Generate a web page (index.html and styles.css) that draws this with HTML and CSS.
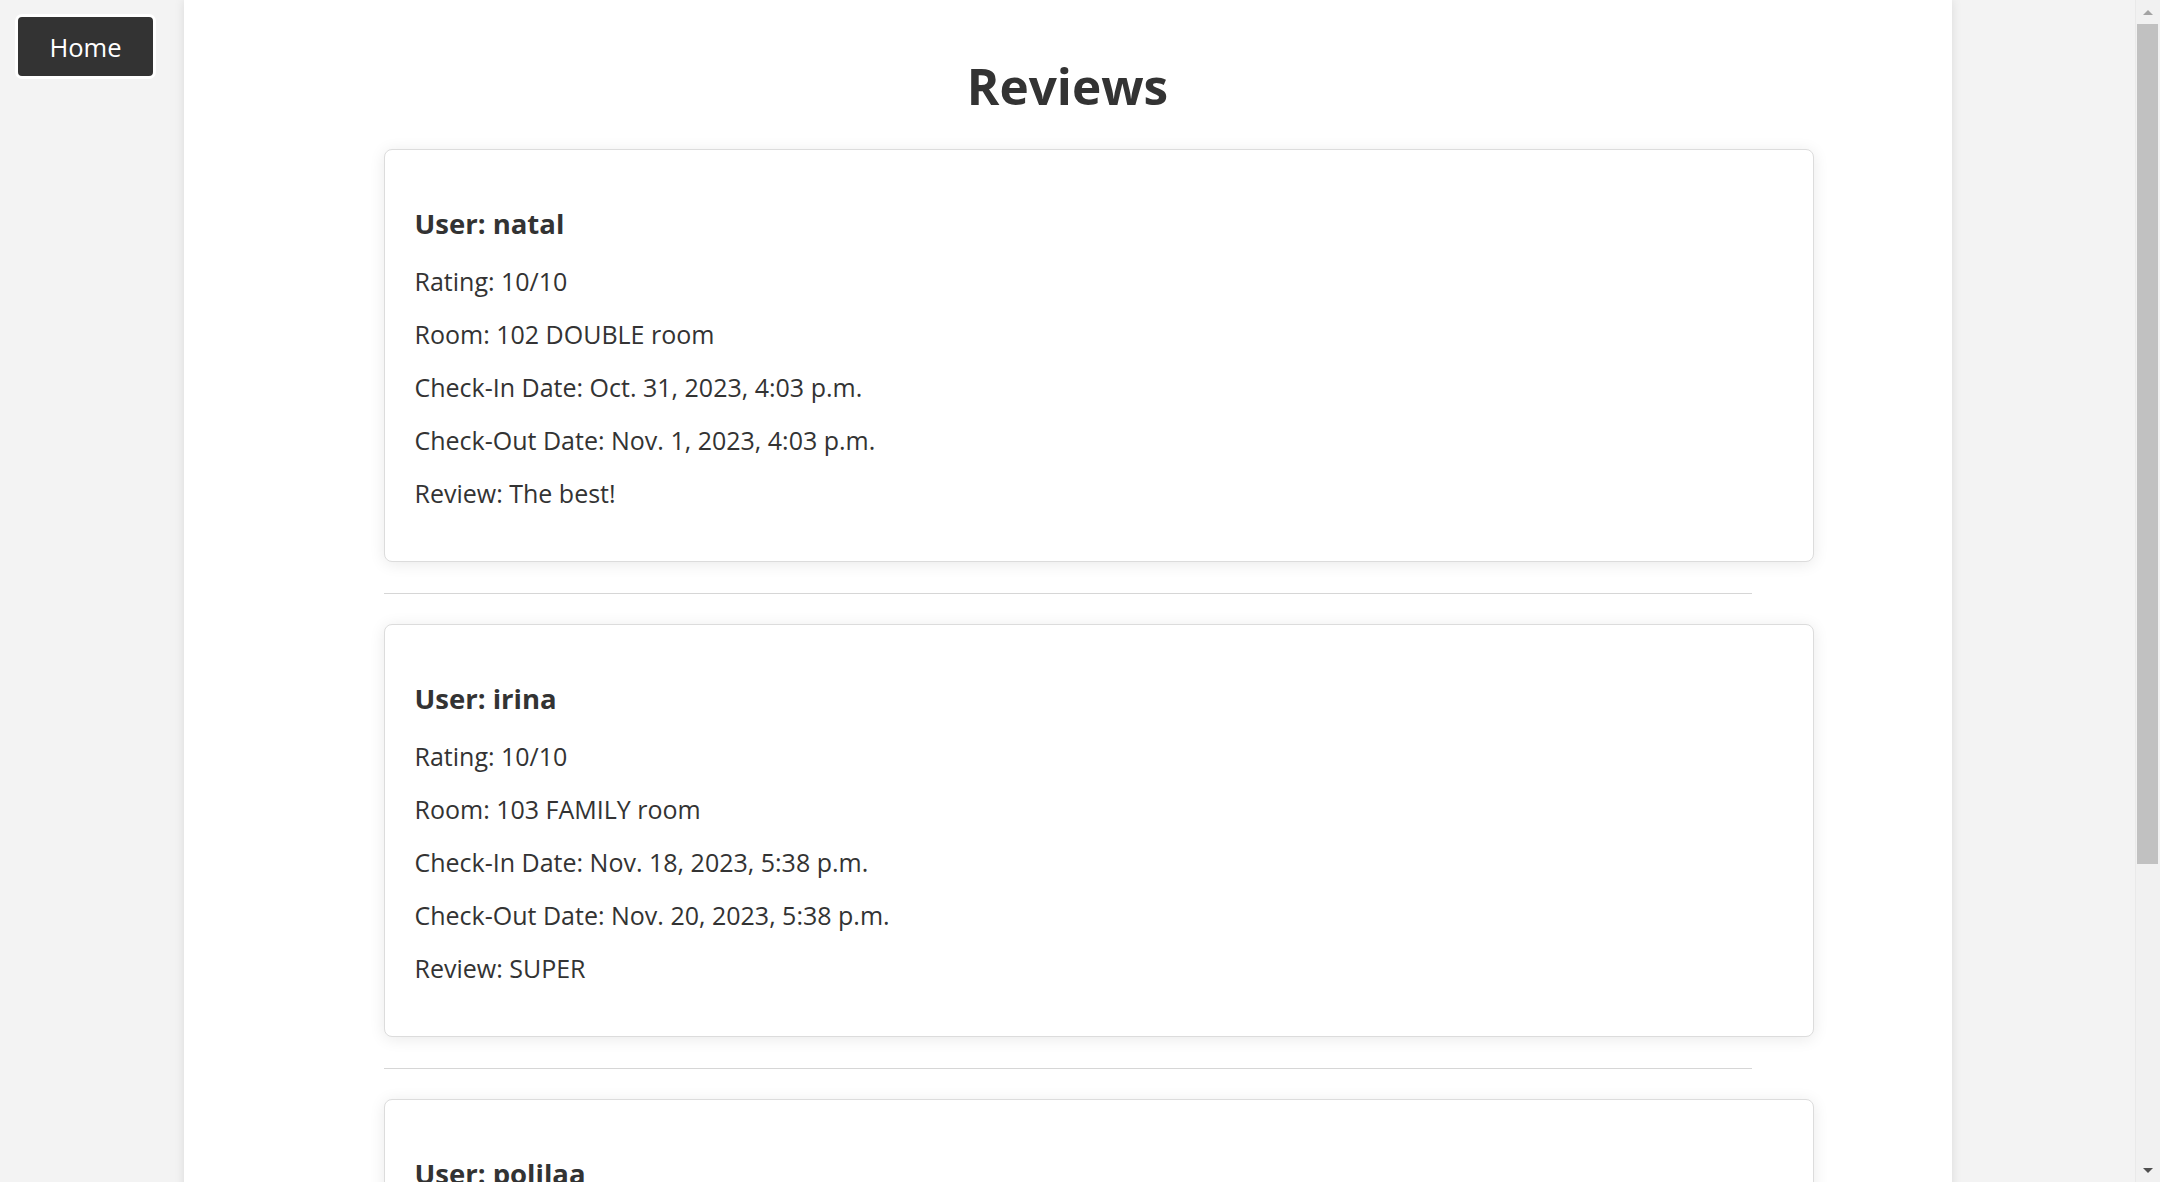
FILE: index.html
```html
<!DOCTYPE html>
<html lang="en">
<head>
<meta charset="utf-8">
<title>Reviews</title>
<link rel="stylesheet" href="styles.css">
</head>
<body>
<a class="home-btn" href="#">Home</a>
<main class="page">
  <h1 class="page-title">Reviews</h1>
  <section class="review-list">
    <article class="review-card">
      <h3 class="review-user">User: natal</h3>
      <p class="review-line">Rating: 10/10</p>
      <p class="review-line">Room: 102 DOUBLE room</p>
      <p class="review-line">Check-In Date: Oct. 31, 2023, 4:03 p.m.</p>
      <p class="review-line">Check-Out Date: Nov. 1, 2023, 4:03 p.m.</p>
      <p class="review-line">Review: The best!</p>
    </article>
    <hr class="divider">
    <article class="review-card">
      <h3 class="review-user">User: irina</h3>
      <p class="review-line">Rating: 10/10</p>
      <p class="review-line">Room: 103 FAMILY room</p>
      <p class="review-line">Check-In Date: Nov. 18, 2023, 5:38 p.m.</p>
      <p class="review-line">Check-Out Date: Nov. 20, 2023, 5:38 p.m.</p>
      <p class="review-line">Review: SUPER</p>
    </article>
    <hr class="divider">
    <article class="review-card">
      <h3 class="review-user">User: polilaa</h3>
      <p class="review-line">Rating: 9/10</p>
      <p class="review-line">Room: 101 SINGLE room</p>
      <p class="review-line">Check-In Date: Dec. 5, 2023, 2:15 p.m.</p>
      <p class="review-line">Check-Out Date: Dec. 7, 2023, 2:15 p.m.</p>
      <p class="review-line">Review: Nice stay</p>
    </article>
    <hr class="divider">
  </section>
</main>
<div class="scrollbar" aria-hidden="true">
  <div class="scroll-btn"><span class="arrow arrow-up"></span></div>
  <div class="scroll-track"><div class="scroll-thumb"></div></div>
  <div class="scroll-btn"><span class="arrow arrow-down"></span></div>
</div>
</body>
</html>
```
FILE: styles.css
```css
html {
  background: #f3f3f3;
}
body {
  margin: 0;
  padding-right: 25px;
  background: #f3f3f3;
  color: #333;
  font-family: "Open Sans", "Noto Sans", sans-serif;
}
.home-btn {
  position: fixed;
  top: 14px;
  left: 15px;
  width: 135px;
  height: 59px;
  display: flex;
  align-items: center;
  justify-content: center;
  background: #333;
  border: 3px solid #fff;
  border-radius: 7px;
  color: #fff;
  text-decoration: none;
  font-size: 25.5px;
  z-index: 5;
}
.page {
  width: 1768px;
  margin: 0 auto;
  box-sizing: border-box;
  min-height: 100vh;
  padding: 57px 200px 34px;
  background: #fff;
  box-shadow: 0 0 10px rgba(0, 0, 0, 0.1);
}
.page-title {
  margin: 0 0 34px;
  text-align: center;
  font-size: 49.5px;
  line-height: 58px;
  font-weight: 700;
  color: #333;
}
.review-card {
  width: 100%;
  padding: 57px 30px 53px;
  border: 1px solid #dcdcdc;
  border-radius: 8px;
  background: #fff;
  box-shadow: 0 2px 16px rgba(0, 0, 0, 0.09);
}
.review-user {
  margin: 0 0 26px;
  font-size: 27.5px;
  line-height: 34px;
  font-weight: 700;
}
.review-line {
  margin: 0 0 24px;
  font-size: 25px;
  line-height: 29px;
}
.review-line:last-child {
  margin-bottom: 0;
}
.divider {
  height: 0;
  margin: 31px 0 30px;
  border: 0;
  border-top: 1px solid #d6d6d6;
}
.scrollbar {
  position: fixed;
  top: 0;
  right: 0;
  width: 25px;
  height: 100vh;
  display: flex;
  flex-direction: column;
  background: #f1f1f1;
  border-left: 1px solid #e9e9e9;
  box-sizing: border-box;
  z-index: 6;
}
.scroll-btn {
  height: 24px;
  flex: none;
  display: flex;
  align-items: center;
  justify-content: center;
}
.scroll-track {
  flex: 1;
  display: flex;
  flex-direction: column;
}
.scroll-thumb {
  height: 840px;
  margin: 0 2px 0 1px;
  background: #c1c1c1;
}
.arrow {
  width: 0;
  height: 0;
  border-left: 5px solid transparent;
  border-right: 5px solid transparent;
}
.arrow-up {
  border-bottom: 5px solid #a3a3a3;
}
.arrow-down {
  border-top: 5px solid #505050;
}
```
